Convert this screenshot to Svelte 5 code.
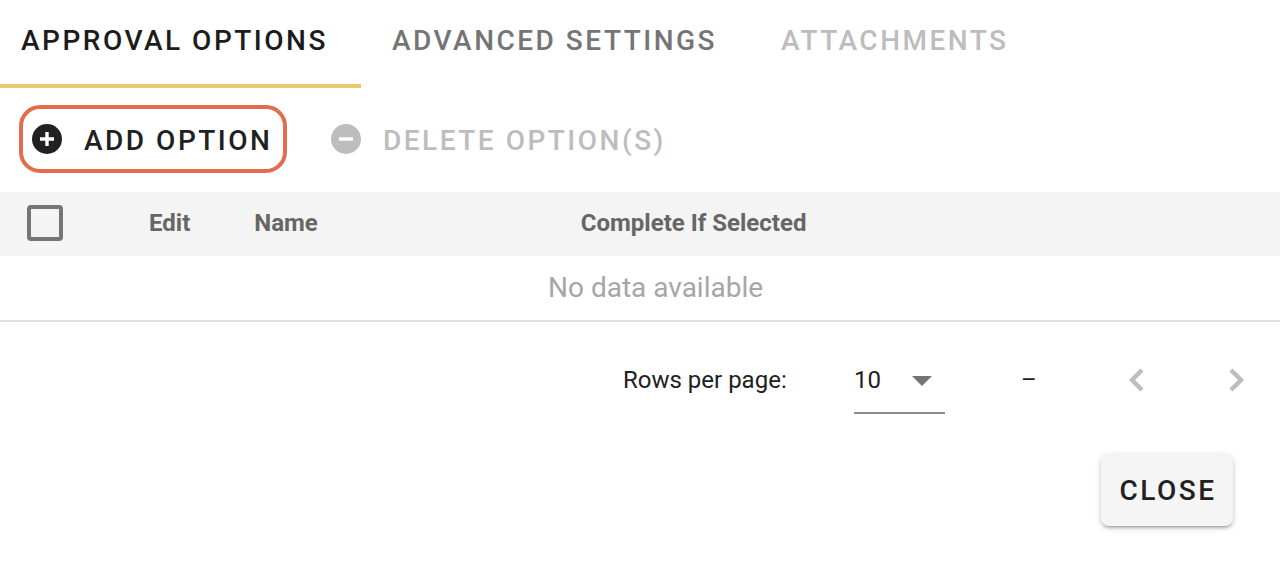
<script>
  const columns = [
    { label: 'Edit', cls: 'edit' },
    { label: 'Name', cls: 'name' },
    { label: 'Complete If Selected', cls: 'complete' }
  ];
</script>

<div class="page">
  <nav class="tabs">
    <div class="tab first active">APPROVAL OPTIONS</div>
    <div class="tab second">ADVANCED SETTINGS</div>
    <div class="tab third">ATTACHMENTS</div>
  </nav>

  <div class="actions">
    <button class="action add">
      <svg class="ico" viewBox="0 0 30 30" aria-hidden="true">
        <circle cx="15" cy="15" r="15" fill="#212121" />
        <path d="M15 8v14M8 15h14" stroke="#fff" stroke-width="3.4" fill="none" />
      </svg>
      <span class="label">ADD OPTION</span>
    </button>
    <button class="action del">
      <svg class="ico" viewBox="0 0 30 30" aria-hidden="true">
        <circle cx="15" cy="15" r="15" fill="#bdbdbd" />
        <path d="M8 15h14" stroke="#fff" stroke-width="3.4" fill="none" />
      </svg>
      <span class="label">DELETE OPTION(S)</span>
    </button>
  </div>

  <div class="thead">
    <span class="checkbox"></span>
    {#each columns as c}
      <span class="th {c.cls}">{c.label}</span>
    {/each}
  </div>
  <div class="empty">No data available</div>

  <div class="pager">
    <span class="rows">Rows per page:</span>
    <div class="select">
      <span class="value">10</span>
      <svg class="caret" viewBox="0 0 20 10" aria-hidden="true"><path d="M0 0h20L10 10z" fill="#757575" /></svg>
    </div>
    <span class="range">–</span>
    <svg class="chev prev" viewBox="0 0 16 24" aria-hidden="true"><path d="M14 2 4 12l10 10" /></svg>
    <svg class="chev next" viewBox="0 0 16 24" aria-hidden="true"><path d="M2 2l10 10-10 10" /></svg>
  </div>

  <div class="footer">
    <button class="close">CLOSE</button>
  </div>
</div>

<style>
  :global(body) {
    margin: 0;
    background: #fff;
  }
  .page {
    width: 1280px;
    height: 562px;
    overflow: hidden;
    font-family: Roboto, "Liberation Sans", sans-serif;
    color: #212121;
  }
  .tabs {
    display: flex;
    height: 88px;
  }
  .tab {
    box-sizing: border-box;
    height: 88px;
    padding: 0 32px;
    line-height: 81px;
    font-size: 28px;
    font-weight: 500;
    letter-spacing: 2.5px;
    white-space: nowrap;
    color: #757575;
  }
  .first {
    width: 361px;
    padding-left: 21px;
    color: #1c1c1c;
    border-bottom: 4px solid #ebc970;
  }
  .second {
    padding-left: 31px;
  }
  .third {
    color: #bdbdbd;
  }
  .actions {
    display: flex;
    align-items: flex-start;
    gap: 40px;
    height: 104px;
    padding: 17px 0 0 19px;
    box-sizing: border-box;
  }
  .action {
    box-sizing: border-box;
    display: flex;
    align-items: center;
    gap: 22px;
    height: 68px;
    margin: 0;
    padding: 0;
    background: none;
    border: 4px solid transparent;
    border-radius: 21px;
    font: 500 28px Roboto, sans-serif;
    letter-spacing: 2.5px;
    white-space: nowrap;
    color: #212121;
  }
  .label {
    padding-top: 2px;
  }
  .add {
    width: 268px;
    padding: 0 0 0 9px;
    border-color: #e36b50;
  }
  .del {
    color: #bdbdbd;
  }
  .ico {
    width: 30px;
    height: 30px;
    flex: none;
  }
  .thead {
    box-sizing: border-box;
    display: flex;
    align-items: center;
    height: 64px;
    padding-bottom: 2px;
    background: #f4f4f4;
    font-size: 24px;
    font-weight: 700;
    color: #666;
  }
  .checkbox {
    box-sizing: border-box;
    width: 36px;
    height: 36px;
    margin-left: 27px;
    border: 4px solid #757575;
    border-radius: 4px;
  }
  .th {
    white-space: nowrap;
  }
  .edit {
    margin-left: 86px;
  }
  .name {
    margin-left: 64px;
  }
  .complete {
    margin-left: 263px;
  }
  .empty {
    box-sizing: border-box;
    height: 66px;
    padding-left: 548px;
    line-height: 63px;
    font-size: 28px;
    color: #a6a6a6;
    border-bottom: 2px solid #e0e0e0;
  }
  .pager {
    display: flex;
    align-items: center;
    height: 116px;
    padding-left: 623px;
    font-size: 24px;
    color: #212121;
  }
  .rows {
    white-space: nowrap;
    width: 231px;
  }
  .select {
    box-sizing: border-box;
    display: flex;
    align-items: center;
    width: 91px;
    height: 68px;
    padding-top: 3px;
    border-bottom: 2px solid #8c8c8c;
    font-size: 24px;
  }
  .value {
    padding-bottom: 2px;
  }
  .caret {
    width: 20px;
    height: 10px;
    margin-left: 31px;
  }
  .range {
    margin-left: 76px;
    width: 107px;
  }
  .chev {
    width: 16px;
    height: 24px;
    fill: none;
    stroke: #bdbdbd;
    stroke-width: 4.4;
  }
  .next {
    margin-left: 85px;
  }
  .footer {
    display: flex;
    justify-content: flex-end;
    padding: 17px 47px 0 0;
  }
  .close {
    box-sizing: border-box;
    width: 132px;
    height: 71px;
    margin: 0;
    padding: 0 0 0 2px;
    background: #f5f5f5;
    border: none;
    border-radius: 8px;
    box-shadow: 0 3px 3px -2px rgba(0,0,0,.25), 0 2px 4px rgba(0,0,0,.16), 0 1px 8px rgba(0,0,0,.1);
    font: 500 28px Roboto, sans-serif;
    letter-spacing: 2.5px;
    color: #212121;
  }
</style>
